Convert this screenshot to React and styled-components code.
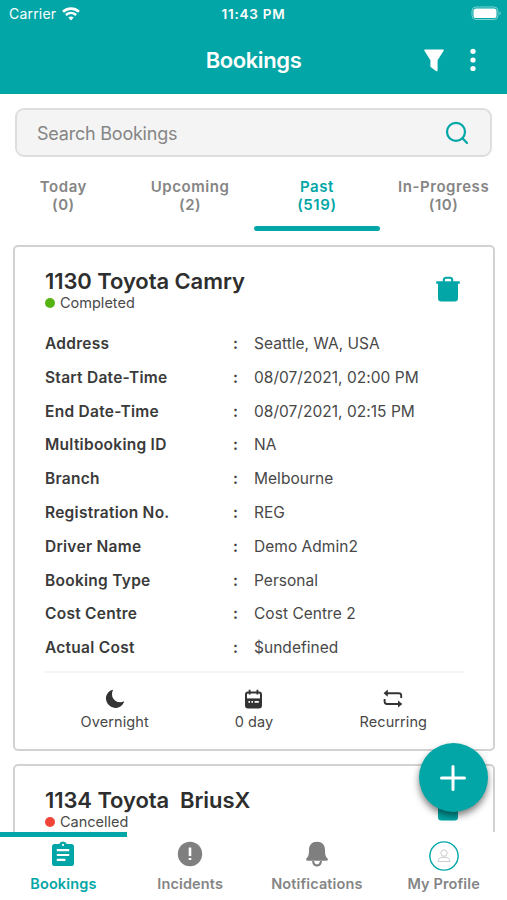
import React, { useState } from "react";
import styled, { createGlobalStyle } from "styled-components";

const TEAL = "#02a6a6";

const bookings = [
	{
		id: 1130,
		title: "1130 Toyota Camry",
		status: "Completed",
		color: "#55b314",
		details: [
			["Address", "Seattle, WA, USA"],
			["Start Date-Time", "08/07/2021, 02:00 PM"],
			["End Date-Time", "08/07/2021, 02:15 PM"],
			["Multibooking ID", "NA"],
			["Branch", "Melbourne"],
			["Registration No.", "REG"],
			["Driver Name", "Demo Admin2"],
			["Booking Type", "Personal"],
			["Cost Centre", "Cost Centre 2"],
			["Actual Cost", "$undefined"],
		],
	},
	{ id: 1134, title: "1134 Toyota  BriusX", status: "Cancelled", color: "#f04438" },
];

const tabs = [
	{ name: "Today", count: 0 },
	{ name: "Upcoming", count: 2 },
	{ name: "Past", count: 519 },
	{ name: "In-Progress", count: 10 },
];

const WifiIcon = () => (
	<svg width="18" height="14" viewBox="0 0 18 14" fill="none" stroke="#fff">
		<path d="M1 4.8C5.6 .6 12.4 .6 17 4.8" strokeWidth="2.6" />
		<path d="M3.9 8C7 5.2 11 5.2 14.1 8" strokeWidth="2.4" />
		<path d="M6.3 10.6C7.9 9.1 10.1 9.1 11.7 10.6L9 13.4Z" fill="#fff" stroke="none" />
	</svg>
);

const BatteryIcon = () => (
	<svg width="31" height="15" viewBox="0 0 31 15">
		<rect x="1" y="1" width="26" height="12.5" rx="4" fill="none" stroke="#7fd2d2" />
		<rect x="2.5" y="2.5" width="23" height="9.5" rx="2.6" fill="#fff" />
		<path d="M28.5 5.2Q31 7.2 28.5 9.4Z" fill="#7fd2d2" />
	</svg>
);

const FilterIcon = () => (
	<svg width="20" height="23" viewBox="0 0 20 23">
		<path
			d="M.8 .5H19.2Q20.2 .7 19.6 1.7L13.6 11.2V21.2Q13.4 22.8 12 22L7.3 18.6Q6.4 18 6.4 17.2V11.2L.4 1.7Q-.1 .7 .8 .5Z"
			fill="#fff"
		/>
	</svg>
);

const DotsIcon = () => (
	<svg width="6" height="24" viewBox="0 0 6 24" fill="#fff">
		<circle cx="3" cy="3.3" r="2.6" />
		<circle cx="3" cy="12" r="2.6" />
		<circle cx="3" cy="20.5" r="2.6" />
	</svg>
);

const SearchIcon = () => (
	<svg width="24" height="24" viewBox="0 0 24 24" fill="none" stroke={TEAL} strokeWidth="2.2" strokeLinecap="round">
		<circle cx="11" cy="10.8" r="9" />
		<path d="M17.5 17.3L22 22" />
	</svg>
);

const TrashIcon = () => (
	<svg width="26" height="26" viewBox="0 0 26 26">
		<path d="M8.8 6V4.2Q8.8 1.8 11.2 1.8H14.8Q17.2 1.8 17.2 4.2V6" fill="none" stroke={TEAL} strokeWidth="2.1" />
		<path d="M1.2 5.2H24.8V7.7H23V22.2Q23 25.5 19.7 25.5H6.3Q3 25.5 3 22.2V7.7H1.2Z" fill={TEAL} />
		<path d="M10 4.2H16" stroke="#fff" strokeWidth="1.8" />
	</svg>
);

const MoonIcon = () => (
	<svg width="20" height="20" viewBox="0 0 20 20">
		<path d="M8.2 .8C2.5 2 .2 7.1 1.2 11.3C2.4 16.2 6.8 19.2 11.3 18.9C14.9 18.7 18 16.4 19.2 12.3C15.6 14 11.7 13.3 9.2 10.7C6.7 8.1 6.3 4.1 8.2 .8Z" fill="#333" />
	</svg>
);

const CalendarIcon = () => (
	<svg width="19" height="20" viewBox="0 0 19 20" fill="none">
		<rect x="2" y="3.4" width="15" height="15.2" rx="2" stroke="#333" strokeWidth="2" />
		<path d="M5.6 .8V5.6M13.4 .8V5.6" stroke="#333" strokeWidth="1.8" />
		<path d="M2 9.4H17V18.5H2Z" fill="#333" />
		<path d="M4.4 12.9H6M7.4 12.9H9M10.6 12.9H14.8" stroke="#fff" strokeWidth="1.7" />
	</svg>
);

const RepeatIcon = () => (
	<svg width="20" height="20" viewBox="0 0 20 20" fill="none" stroke="#333" strokeWidth="1.9">
		<path d="M3 4.2H15.8Q18.2 4.2 18.2 6.6V9" />
		<path d="M1.6 10V12.6Q1.6 15 4 15H16.5" />
		<path d="M4.8 .6V7.8L.6 4.2ZM15 11.4V18.6L19.3 15Z" fill="#333" stroke="none" />
	</svg>
);

const ClipboardIcon = () => (
	<svg width="24" height="26" viewBox="0 0 24 26">
		<path
			d="M3.2 3H8.2Q9 .6 12 .5Q15 .6 15.8 3H20.8Q23 3.2 23 5.2V22.8Q23 25 20.8 25H3.2Q1 25 1 22.8V5.2Q1 3.2 3.2 3Z"
			fill={TEAL}
		/>
		<circle cx="12" cy="3.9" r="1.1" fill="#fff" />
		<path d="M5.8 9.2H18.2M5.8 14H18.2M5.8 18.8H14.4" stroke="#fff" strokeWidth="2.2" />
	</svg>
);

const AlertIcon = () => (
	<svg width="26" height="26" viewBox="0 0 26 26">
		<circle cx="13" cy="13" r="12.2" fill="#7f7f7f" />
		<path d="M13 7.8V13.8" stroke="#fff" strokeWidth="2.6" strokeLinecap="square" />
		<path d="M13 17V19" stroke="#fff" strokeWidth="2.6" />
	</svg>
);

const BellIcon = () => (
	<svg width="24" height="26" viewBox="0 0 24 26">
		<path
			d="M12 .8C6.8 .8 4 4.3 4 8.8C4 13.6 3.4 15.4 1.8 17.1C.6 18.5 1 19.8 2.6 19.8H21.4C23 19.8 23.4 18.5 22.2 17.1C20.6 15.4 20 13.6 20 8.8C20 4.3 17.2 .8 12 .8Z"
			fill="#7f7f7f"
		/>
		<path d="M8 20Q8.6 24.4 12 24.4T16 20" fill="none" stroke="#7f7f7f" strokeWidth="2" />
	</svg>
);

const ProfileIcon = () => (
	<svg width="30" height="30" viewBox="0 0 30 30" fill="none">
		<circle cx="15" cy="15" r="14.1" stroke={TEAL} strokeWidth="1.4" />
		<circle cx="15" cy="12.1" r="3.2" stroke="#ccc" strokeWidth="1" />
		<path d="M9 20.6Q9.4 16.4 13 16.1Q15 17.2 17 16.1Q20.6 16.4 21 20.6Z" stroke="#ccc" strokeWidth="1" />
	</svg>
);

const navItems = [
	{ name: "Bookings", icon: <ClipboardIcon /> },
	{ name: "Incidents", icon: <AlertIcon /> },
	{ name: "Notifications", icon: <BellIcon /> },
	{ name: "My Profile", icon: <ProfileIcon /> },
];

const BookingCard = ({ booking }) => {
	return (
		<Card>
			<CardHead>
				<div>
					<CardTitle>{booking.title}</CardTitle>
					<Status>
						<Dot $color={booking.color} />
						{booking.status}
					</Status>
				</div>
				<TrashButton aria-label="Delete booking">
					<TrashIcon />
				</TrashButton>
			</CardHead>
			{booking.details && (
				<>
					<Details>
						{booking.details.map(([label, value]) => (
							<DetailRow key={label}>
								<Label>{label}</Label>
								<Colon>:</Colon>
								<Value>{value}</Value>
							</DetailRow>
						))}
					</Details>
					<CardFoot>
						<FootItem>
							<MoonIcon />
							Overnight
						</FootItem>
						<FootItem>
							<CalendarIcon />0 day
						</FootItem>
						<FootItem>
							<RepeatIcon />
							Recurring
						</FootItem>
					</CardFoot>
				</>
			)}
		</Card>
	);
};

const App = () => {
	const [tab, setTab] = useState("Past");
	const [page, setPage] = useState("Bookings");

	return (
		<Screen>
			<GlobalStyle />
			<Header>
				<StatusBar>
					<Carrier>
						Carrier <WifiIcon />
					</Carrier>
					<Clock>11:43 PM</Clock>
					<BatteryIcon />
				</StatusBar>
				<TitleBar>
					<span />
					<h1>Bookings</h1>
					<Actions>
						<FilterIcon />
						<DotsIcon />
					</Actions>
				</TitleBar>
			</Header>
			<SearchBox>
				<SearchInput placeholder="Search Bookings" />
				<SearchIcon />
			</SearchBox>
			<Tabs>
				{tabs.map((t) => (
					<Tab key={t.name} $active={t.name === tab} onClick={() => setTab(t.name)}>
						<span>{t.name}</span>
						<span>({t.count})</span>
					</Tab>
				))}
			</Tabs>
			<List>
				{bookings.map((b) => (
					<BookingCard key={b.id} booking={b} />
				))}
			</List>
			<AddButton aria-label="Add booking">
				<svg width="26" height="26" viewBox="0 0 26 26" stroke="#fff" strokeWidth="3" strokeLinecap="round">
					<path d="M13 1.5V24.5M1.5 13H24.5" />
				</svg>
			</AddButton>
			<BottomNav>
				{navItems.map((item) => (
					<NavItem key={item.name} $active={item.name === page} onClick={() => setPage(item.name)}>
						<NavIcon>{item.icon}</NavIcon>
						<span>{item.name}</span>
					</NavItem>
				))}
			</BottomNav>
		</Screen>
	);
};

const GlobalStyle = createGlobalStyle`
	* {
		box-sizing: border-box;
	}
	body {
		margin: 0;
		font-family: Inter, "Liberation Sans", sans-serif;
		background: #fff;
	}
	button {
		font-family: inherit;
		border: 0;
		padding: 0;
		background: none;
	}
	svg {
		display: block;
		flex-shrink: 0;
	}
`;
const Screen = styled.div`
	position: relative;
	display: flex;
	flex-direction: column;
	width: 507px;
	height: 900px;
	overflow: hidden;
`;
const Header = styled.header`
	flex: none;
	height: 94px;
	color: #fff;
	background: ${TEAL};
`;
const StatusBar = styled.div`
	display: grid;
	grid-template-columns: 1fr auto 1fr;
	align-items: center;
	height: 27px;
	padding: 0 5px 0 9px;

	> svg {
		justify-self: end;
	}
`;
const Carrier = styled.div`
	display: flex;
	align-items: center;
	gap: 6px;
	font-size: 14px;
	letter-spacing: 0.2px;
`;
const Clock = styled.div`
	margin-right: 4px;
	font-size: 13.5px;
	font-weight: 600;
	letter-spacing: 0.75px;
`;
const TitleBar = styled.div`
	display: grid;
	grid-template-columns: 1fr auto 1fr;
	align-items: center;
	height: 66px;
	padding: 0 31px;

	h1 {
		margin: 0;
		font-size: 22px;
		font-weight: 600;
		letter-spacing: -0.4px;
	}
`;
const Actions = styled.div`
	display: flex;
	justify-content: flex-end;
	align-items: center;
	gap: 26px;
`;
const SearchBox = styled.div`
	flex: none;
	display: flex;
	align-items: center;
	height: 49px;
	margin: 14px 15px 0;
	padding: 0 21px 0 20px;
	border: 2px solid #dedede;
	border-radius: 9px;
	background: #f4f4f4;
`;
const SearchInput = styled.input`
	flex: 1;
	padding: 1px 0 0;
	border: 0;
	outline: 0;
	background: none;
	font-family: inherit;
	font-size: 18px;
	letter-spacing: -0.22px;

	&::placeholder {
		color: #858585;
	}
`;
const Tabs = styled.div`
	flex: none;
	display: grid;
	grid-template-columns: repeat(4, 1fr);
	height: 74px;
`;
const Tab = styled.button`
	position: relative;
	display: flex;
	flex-direction: column;
	align-items: center;
	padding-top: 21px;
	font-size: 15px;
	line-height: 18px;
	font-weight: 600;
	letter-spacing: 0.55px;
	white-space: nowrap;
	color: ${(props) => (props.$active ? TEAL : "#858585")};

	&::after {
		content: "";
		position: absolute;
		left: 0;
		right: 0;
		bottom: 0.5px;
		height: 5px;
		border-radius: 3px;
		background: ${(props) => (props.$active ? TEAL : "transparent")};
	}
`;
const List = styled.main`
	flex: 1;
	min-height: 0;
	display: flex;
	flex-direction: column;
	gap: 13px;
	padding: 14px 12px 0 13px;
	overflow: hidden;
`;
const Card = styled.section`
	flex: none;
	height: 506px;
	padding: 20px 29px 0 30px;
	border: 2px solid #d2d2d2;
	border-radius: 5px;
`;
const CardHead = styled.div`
	display: flex;
	justify-content: space-between;
	height: 60px;
`;
const CardTitle = styled.h2`
	margin: 0;
	font-size: 22px;
	line-height: 28px;
	font-weight: 600;
	letter-spacing: -0.08px;
	color: #2e2e2e;
	white-space: pre;
`;
const Status = styled.div`
	display: flex;
	align-items: center;
	gap: 5px;
	font-size: 14.5px;
	line-height: 16px;
	color: #4a4a4a;
`;
const Dot = styled.span`
	width: 10px;
	height: 10px;
	border-radius: 50%;
	background: ${(props) => props.$color};
`;
const TrashButton = styled.button`
	align-self: flex-start;
	margin: 9px 3px 0 0;
`;
const Details = styled.div`
	height: 346px;
	border-bottom: 2px solid #f4f4f4;
`;
const DetailRow = styled.div`
	display: grid;
	grid-template-columns: 188px 21px 1fr;
	height: 33.8px;
	line-height: 33.8px;
	font-size: 15.5px;
	letter-spacing: 0.03px;
	color: #484848;
`;
const Label = styled.span`
	font-weight: 600;
	letter-spacing: 0.27px;
	color: #3a3a3a;
`;
const Colon = styled(Label)``;
const Value = styled.span`
	white-space: nowrap;
`;
const CardFoot = styled.div`
	display: grid;
	grid-template-columns: repeat(3, 1fr);
	padding: 16px 1px 0 0;
`;
const FootItem = styled.div`
	display: flex;
	flex-direction: column;
	align-items: center;
	gap: 3px;
	font-size: 14.5px;
	line-height: 20px;
	letter-spacing: 0.08px;
	color: #484848;
`;
const AddButton = styled.button`
	position: absolute;
	right: 19.5px;
	bottom: 88px;
	display: grid;
	place-items: center;
	width: 69px;
	height: 69px;
	border-radius: 50%;
	background: ${TEAL};
	box-shadow: 0 4px 7px rgba(0, 0, 0, 0.5);
`;
const BottomNav = styled.nav`
	flex: none;
	display: grid;
	grid-template-columns: repeat(4, 1fr);
	height: 68px;
	background: #fff;
	z-index: 1;
`;
const NavItem = styled.button`
	display: flex;
	flex-direction: column;
	align-items: center;
	border-top: 5px solid ${(props) => (props.$active ? TEAL : "transparent")};
	font-size: 14.5px;
	line-height: 18px;
	font-weight: 600;
	letter-spacing: 0.13px;
	color: ${(props) => (props.$active ? TEAL : "#858585")};
	white-space: nowrap;
`;
const NavIcon = styled.div`
	display: flex;
	justify-content: center;
	height: 38px;
	padding-top: 4px;
`;
export default App;
